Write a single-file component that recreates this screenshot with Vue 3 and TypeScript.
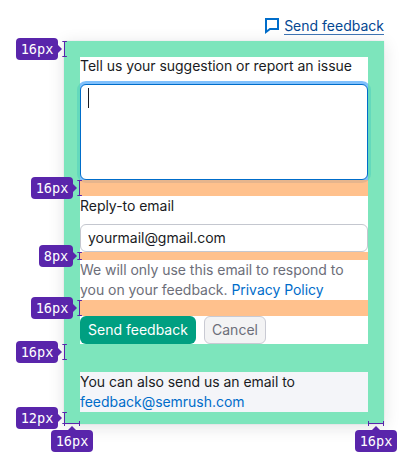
<script setup lang="ts">
interface Tag {
  id: string
  label: string
  side: 'left' | 'top'
}

const tags: Tag[] = [
  { id: 'pad-top', label: '16px', side: 'left' },
  { id: 'gap-email', label: '16px', side: 'left' },
  { id: 'gap-hint', label: '8px', side: 'left' },
  { id: 'gap-actions', label: '16px', side: 'left' },
  { id: 'pad-form', label: '16px', side: 'left' },
  { id: 'pad-bottom', label: '12px', side: 'left' },
  { id: 'pad-left', label: '16px', side: 'top' },
  { id: 'pad-right', label: '16px', side: 'top' },
]

const vertical = [
  { x: 64, y: 41, size: 16 },
  { x: 79, y: 180, size: 16 },
  { x: 79, y: 252, size: 8 },
  { x: 79, y: 300, size: 16 },
  { x: 64, y: 344, size: 16 },
  { x: 64, y: 412, size: 12 },
]

const horizontal = [
  { x: 64, y: 423 },
  { x: 368, y: 423 },
]
</script>

<template>
  <main class="page">
    <header class="trigger">
      <svg class="trigger-icon" width="14" height="16" viewBox="0 0 14 16">
        <path d="M1 1H13V11H5L1 14Z" fill="none" stroke="#006dca" stroke-width="2" />
      </svg>
      <a class="trigger-link">Send feedback</a>
    </header>

    <section class="card">
      <form class="form">
        <label class="label first">Tell us your suggestion or report an issue</label>
        <div class="textarea"><span class="caret"></span></div>
        <div class="gap large"></div>
        <label class="label">Reply-to email</label>
        <div class="input">yourmail@gmail.com</div>
        <div class="gap small"></div>
        <p class="hint">We will only use this email to respond to<br />you on your feedback. <a class="link">Privacy Policy</a></p>
        <div class="gap actions-gap"></div>
        <div class="actions">
          <button type="button" class="button primary">Send feedback</button>
          <button type="button" class="button secondary">Cancel</button>
        </div>
      </form>
      <div class="band"></div>
      <footer class="footer">You can also send us an email to<br /><a class="link">feedback@semrush.com</a></footer>
    </section>

    <svg class="markers" width="413" height="468" viewBox="0 0 413 468">
      <path
        v-for="m in vertical"
        :key="`v${m.x}-${m.y}`"
        :d="`M${m.x - 1.7} ${m.y + 0.5}h4.6M${m.x - 1.7} ${m.y + m.size - 0.5}h4.6M${m.x + 0.5} ${m.y}v${m.size}`"
      />
      <path
        v-for="m in horizontal"
        :key="`h${m.x}`"
        :d="`M${m.x + 0.5} ${m.y - 2}v5M${m.x + 15.5} ${m.y - 2}v5M${m.x} ${m.y + 0.5}h16`"
      />
    </svg>

    <div v-for="tag in tags" :key="tag.id" class="tag" :class="[tag.id, tag.side]">{{ tag.label }}</div>
  </main>
</template>

<style>
body {
  margin: 0;
  background: #fff;
}
</style>

<style scoped>
* {
  box-sizing: border-box;
}
.page {
  position: relative;
  width: 413px;
  height: 468px;
  padding: 16px 29px 0 64px;
  overflow: hidden;
  font: 14px/20px Inter, sans-serif;
  color: #191b23;
}
.trigger {
  display: flex;
  justify-content: flex-end;
  align-items: flex-start;
  height: 25px;
  gap: 5px;
}
.trigger-icon {
  margin-top: 2px;
}
.trigger-link {
  height: 19px;
  color: #044792;
  border-bottom: 1px solid #3f75b5;
}
.card {
  position: relative;
  height: 383px;
  padding: 16px 16px 12px;
  background: #fff;
  letter-spacing: -0.035px;
  box-shadow: 0 0 1px rgba(25, 27, 35, 0.16), 0 3px 16px rgba(25, 27, 35, 0.12);
}
.card::after {
  content: '';
  position: absolute;
  inset: 0;
  border: 16px solid rgba(93, 223, 171, 0.8);
  border-bottom-width: 12px;
  pointer-events: none;
}
.form {
  display: flex;
  flex-direction: column;
  height: 287px;
}
.label {
  height: 28px;
}
.label.first {
  height: 27px;
  line-height: 18px;
}
.textarea {
  height: 96px;
  padding: 3px 7px;
  border: 1px solid #006dca;
  border-radius: 6px;
  background: #fff;
  box-shadow: 0 0 0 3px #80c0fc;
}
.caret {
  display: block;
  width: 1px;
  height: 20px;
  background: #191b23;
}
.gap {
  position: relative;
  background: rgba(255, 178, 112, 0.8);
}
.large,
.actions-gap {
  height: 16px;
}
.small {
  height: 8px;
}
.input {
  height: 28px;
  padding: 0 7px;
  line-height: 26px;
  border: 1px solid #c4c7cf;
  border-radius: 6px;
}
.hint {
  margin: 0;
  height: 40px;
  color: #6c6e79;
}
.link {
  color: #006dca;
}
.actions {
  display: flex;
  gap: 8px;
}
.button {
  height: 28px;
  padding: 0 8px;
  border: 0;
  border-radius: 6px;
  font: inherit;
  white-space: nowrap;
}
.primary {
  width: 116px;
  background: #009f81;
  color: #fff;
}
.secondary {
  width: 62px;
  padding: 0;
  background: #f3f3f4;
  border: 1px solid #c9cad3;
  color: #6c6e79;
}
.band {
  height: 28px;
  background: rgba(93, 223, 171, 0.8);
}
.footer {
  height: 40px;
  background: #f4f5f9;
}
.markers {
  position: absolute;
  inset: 0;
  fill: none;
  stroke: #5925ab;
  stroke-width: 1;
}
.tag {
  position: absolute;
  width: 42px;
  height: 22px;
  border-radius: 4px;
  background: #5925ab;
  color: #fff;
  font: 13.6px/22px 'DejaVu Sans Mono', monospace;
  text-align: center;
}
.tag::after {
  content: '';
  position: absolute;
  border: 4px solid transparent;
}
.tag.left::after {
  left: 100%;
  top: 7px;
  border-left-color: #5925ab;
  border-right: 0;
}
.tag.top::after {
  left: 17px;
  bottom: 100%;
  border-bottom-color: #5925ab;
  border-top: 0;
}
.pad-top {
  left: 16px;
  top: 38px;
}
.gap-email {
  left: 31px;
  top: 177px;
}
.gap-hint {
  left: 39px;
  top: 245px;
  width: 34px;
}
.gap-actions {
  left: 31px;
  top: 297px;
}
.pad-form {
  left: 16px;
  top: 341px;
}
.pad-bottom {
  left: 16px;
  top: 407px;
}
.pad-left {
  left: 51px;
  top: 430px;
}
.pad-right {
  left: 355px;
  top: 430px;
}
</style>
